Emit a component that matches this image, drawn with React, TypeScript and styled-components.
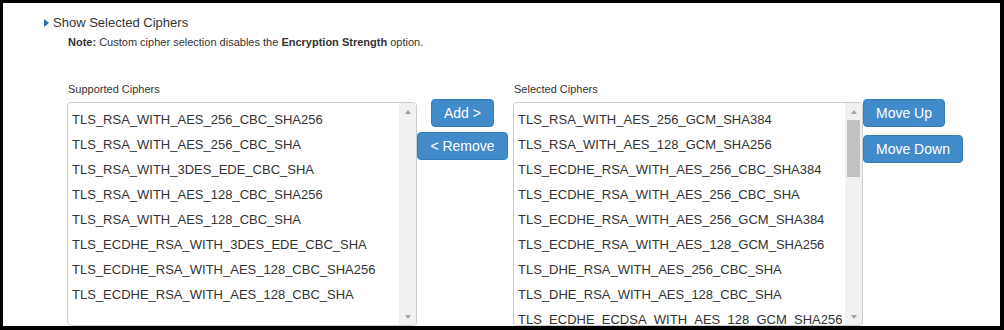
import React from "react";
import styled, { createGlobalStyle } from "styled-components";

const Global = createGlobalStyle`
  html, body { margin: 0; padding: 0; background: #fff; }
  body { font-family: "Liberation Sans", Arial, sans-serif; color: #333; }
`;

const Frame = styled.div`
  box-sizing: border-box;
  width: 1004px;
  height: 330px;
  border-style: solid;
  border-color: #000;
  border-width: 3px 4px 4px 3px;
  overflow: hidden;
  background: #fff;
`;

const Toggle = styled.div`
  display: flex;
  align-items: center;
  gap: 4px;
  margin: 11px 0 0 41px;
  font-size: 13px;
  line-height: 18px;
  color: #333;
`;

const Caret = styled.span`
  width: 0;
  height: 0;
  border-top: 4px solid transparent;
  border-bottom: 4px solid transparent;
  border-left: 5px solid #2f6aa3;
`;

const Note = styled.div`
  margin: 3px 0 0 65px;
  font-size: 11px;
  line-height: 15px;
  color: #333;
  b { font-weight: bold; }
`;

const Columns = styled.div`
  display: flex;
  align-items: flex-start;
  margin: 32px 0 0 64px;
`;

const Column = styled.div`
  display: flex;
  flex-direction: column;
  width: 350px;
`;

const Label = styled.div`
  font-size: 11px;
  line-height: 14px;
  margin: 0 0 6px 1px;
  color: #333;
`;

const ListBox = styled.div`
  box-sizing: border-box;
  width: 350px;
  height: 224px;
  border: 1px solid #ccc;
  border-radius: 4px;
  display: flex;
  overflow: hidden;
  background: #fff;
`;

const Items = styled.div`
  flex: 1;
  padding: 4px 0 0 4px;
  overflow: hidden;
`;

const Item = styled.div`
  font-size: 13px;
  line-height: 25px;
  height: 25px;
  white-space: nowrap;
  color: #333;
`;

const ScrollBar = styled.div`
  width: 17px;
  display: flex;
  flex-direction: column;
  background: #f1f1f1;
`;

const ArrowBtn = styled.div`
  height: 17px;
  display: flex;
  align-items: center;
  justify-content: center;
  flex-shrink: 0;
`;

const ArrowUp = styled.span`
  width: 0;
  height: 0;
  border-left: 3.5px solid transparent;
  border-right: 3.5px solid transparent;
  border-bottom: 4px solid #a3a3a3;
`;

const ArrowDown = styled.span`
  width: 0;
  height: 0;
  border-left: 3.5px solid transparent;
  border-right: 3.5px solid transparent;
  border-top: 4px solid #a3a3a3;
`;

const Track = styled.div`
  flex: 1;
  display: flex;
  flex-direction: column;
  align-items: center;
`;

const Thumb = styled.div<{ $h: number }>`
  width: 13px;
  height: ${(p) => p.$h}px;
  background: #c1c1c1;
`;

const ButtonStack = styled.div<{ $gap: number; $w?: number; $align: string }>`
  display: flex;
  flex-direction: column;
  align-items: ${(p) => p.$align};
  gap: ${(p) => p.$gap}px;
  margin-top: 17px;
  ${(p) => (p.$w ? `width: ${p.$w}px;` : "")}
`;

const Btn = styled.button`
  box-sizing: border-box;
  height: 28px;
  padding: 0 12px;
  border: 1px solid #357ebd;
  border-radius: 4px;
  background: #428bca;
  color: #fff;
  font-family: "Liberation Sans", Arial, sans-serif;
  font-size: 14px;
  line-height: 26px;
  white-space: nowrap;
  cursor: pointer;
`;

const Spacer = styled.div`
  width: 5px;
  flex-shrink: 0;
`;

const supported = [
  "TLS_RSA_WITH_AES_256_CBC_SHA256",
  "TLS_RSA_WITH_AES_256_CBC_SHA",
  "TLS_RSA_WITH_3DES_EDE_CBC_SHA",
  "TLS_RSA_WITH_AES_128_CBC_SHA256",
  "TLS_RSA_WITH_AES_128_CBC_SHA",
  "TLS_ECDHE_RSA_WITH_3DES_EDE_CBC_SHA",
  "TLS_ECDHE_RSA_WITH_AES_128_CBC_SHA256",
  "TLS_ECDHE_RSA_WITH_AES_128_CBC_SHA",
];

const selected = [
  "TLS_RSA_WITH_AES_256_GCM_SHA384",
  "TLS_RSA_WITH_AES_128_GCM_SHA256",
  "TLS_ECDHE_RSA_WITH_AES_256_CBC_SHA384",
  "TLS_ECDHE_RSA_WITH_AES_256_CBC_SHA",
  "TLS_ECDHE_RSA_WITH_AES_256_GCM_SHA384",
  "TLS_ECDHE_RSA_WITH_AES_128_GCM_SHA256",
  "TLS_DHE_RSA_WITH_AES_256_CBC_SHA",
  "TLS_DHE_RSA_WITH_AES_128_CBC_SHA",
  "TLS_ECDHE_ECDSA_WITH_AES_128_GCM_SHA256",
];

function List({ items, thumb }: { items: string[]; thumb: number }) {
  return (
    <ListBox>
      <Items>
        {items.map((t) => (
          <Item key={t}>{t}</Item>
        ))}
      </Items>
      <ScrollBar>
        <ArrowBtn>
          <ArrowUp />
        </ArrowBtn>
        <Track>{thumb > 0 && <Thumb $h={thumb} />}</Track>
        <ArrowBtn>
          <ArrowDown />
        </ArrowBtn>
      </ScrollBar>
    </ListBox>
  );
}

export default function App() {
  return (
    <>
      <Global />
      <Frame>
        <Toggle>
          <Caret />
          <span>Show Selected Ciphers</span>
        </Toggle>
        <Note>
          <b>Note:</b> Custom cipher selection disables the <b>Encryption Strength</b> option.
        </Note>
        <Columns>
          <Column>
            <Label>Supported Ciphers</Label>
            <List items={supported} thumb={0} />
          </Column>
          <ButtonStack $gap={5} $w={91} $align="center">
            <Btn>Add &gt;</Btn>
            <Btn>&lt; Remove</Btn>
          </ButtonStack>
          <Spacer />
          <Column>
            <Label>Selected Ciphers</Label>
            <List items={selected} thumb={57} />
          </Column>
          <ButtonStack $gap={8} $align="flex-start">
            <Btn>Move Up</Btn>
            <Btn>Move Down</Btn>
          </ButtonStack>
        </Columns>
      </Frame>
    </>
  );
}
